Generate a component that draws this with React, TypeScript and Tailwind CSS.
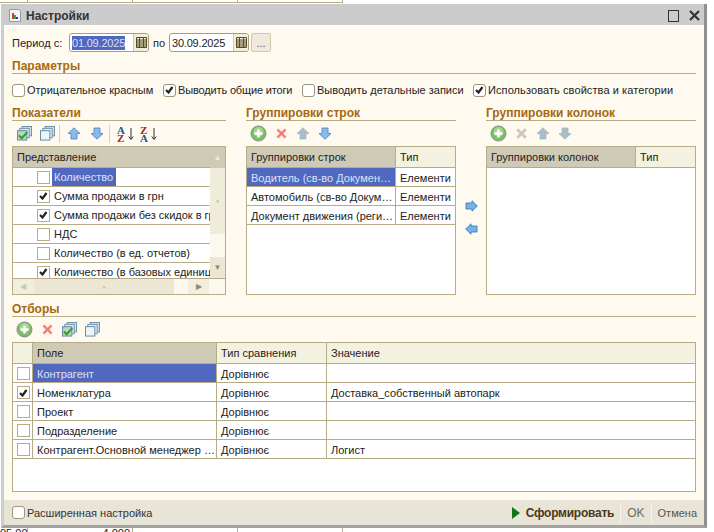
import type { ReactNode } from 'react'
import { clsx } from 'clsx'

const line = 'border-[#b7ac85]'

function AddIcon() {
  return (
    <svg width="17" height="17" viewBox="0 0 17 17">
      <circle cx="8.500" cy="8.500" r="7.500" fill="#7fb96b" stroke="#7d947e" />
      <circle cx="8.500" cy="7" r="5" fill="#a5d68f" />
      <path d="M8.500 4.500v8M4.500 8.500h8" stroke="#fff" strokeWidth="2.400" />
    </svg>
  )
}

function DeleteIcon({ off }: { off?: boolean }) {
  return (
    <svg width="13" height="13" viewBox="0 0 14 14">
      <path
        d="M2 3.500 3.500 2 7 5.300 10.500 2 12 3.500 8.700 7 12 10.500 10.500 12 7 8.700 3.500 12 2 10.500 5.300 7Z"
        fill={off ? '#cfc9bb' : '#f0766c'}
        stroke={off ? '#bfb9ab' : '#e8a49c'}
        strokeWidth="0.8"
      />
    </svg>
  )
}

function ArrowIcon({ dir, off }: { dir: 'up' | 'down'; off?: boolean }) {
  const fill = off ? '#a9bcc8' : '#86bbee'
  const stroke = off ? '#a6b5be' : '#4a80bd'
  return (
    <svg width="14" height="13" viewBox="0 0 14 13" className={dir === 'down' ? 'rotate-180' : ''}>
      <path d="M7 .8 13 6.500H10V12H4V6.500H1Z" fill={fill} stroke={stroke} strokeWidth="0.8" />
    </svg>
  )
}

function SideArrow({ dir }: { dir: 'left' | 'right' }) {
  return (
    <svg width="13" height="12" viewBox="0 0 13 12" className={dir === 'left' ? 'rotate-180' : ''}>
      <path d="M1 3H7V.8L12.300 6 7 11.200V9H1Z" fill="#72b2e8" stroke="#3f78b8" strokeWidth="0.9" />
    </svg>
  )
}

function StackIcon({ checked }: { checked?: boolean }) {
  return (
    <svg width="15" height="15" viewBox="0 0 16 16">
      <rect x="5.500" y="0.500" width="10" height="10" fill="#cfe0ee" stroke="#6a8fa8" />
      <rect x="3" y="2.500" width="10" height="10" fill="#dfeaf3" stroke="#6a8fa8" />
      <rect x="0.500" y="5" width="10" height="10" fill={checked ? '#bcd4c4' : '#eef4f9'} stroke="#5f88a4" />
      {checked && <path d="M2 10 5 13 11 6.500" fill="none" stroke="#2aa02a" strokeWidth="2.200" />}
    </svg>
  )
}

function SortIcon({ top, bottom }: { top: string; bottom: string }) {
  return (
    <span className="flex h-[16px] w-[17px] items-center">
      <span className="flex w-[11px] flex-col font-['Liberation_Serif',serif] text-[11px] font-bold leading-[8px]">
        <span className={top === 'A' ? 'text-[#20558f]' : 'text-[#a3222a]'}>{top}</span>
        <span className={bottom === 'A' ? 'text-[#20558f]' : 'text-[#a3222a]'}>{bottom}</span>
      </span>
      <svg width="6" height="14" viewBox="0 0 6 14">
        <path d="M3 1V12M.8 9.500 3 12.500 5.200 9.500" fill="none" stroke="#333" strokeWidth="1" />
      </svg>
    </span>
  )
}

function CalendarIcon() {
  return (
    <svg width="11" height="11" viewBox="0 0 11 11">
      <path
        d="M.5.500h10v10H.5zM.5 3h10M.5 5h10M.5 7h10M.5 9h10M3.500.500v10M7.500.500v10"
        fill="none"
        stroke="#5a4a20"
      />
    </svg>
  )
}

function Check({ on, flat }: { on?: boolean; flat?: boolean }) {
  return (
    <span
      className={clsx(
        'flex h-[13px] w-[13px] shrink-0 items-center justify-center border bg-white',
        flat ? line : 'rounded-[3px] border-[#9d9479]'
      )}
    >
      {on && (
        <svg width="9" height="8" viewBox="0 0 9 8">
          <path d="M1 4 3.500 6.500 7.500 1" fill="none" stroke="#222" strokeWidth="2.200" />
        </svg>
      )}
    </span>
  )
}

function Heading({ children, className }: { children: ReactNode; className?: string }) {
  return (
    <div className={clsx('h-[16px] border-b pt-[1px] text-[12px] font-bold leading-[14px] text-[#a5690d]', line, className)}>
      {children}
    </div>
  )
}

function DateField({ value, selected, width }: { value: string; selected?: boolean; width: string }) {
  return (
    <div className={clsx('flex h-[19px] items-stretch rounded-[3px] border border-[#a89e7c] bg-white', width)}>
      <div className="flex flex-1 items-center pl-[2px] pt-[1px] tracking-[-0.2px]">
        <span className={selected ? 'bg-[#5068c0] text-[#d8dff5]' : ''}>{value}</span>
      </div>
      <div className="flex w-[15px] items-center justify-center rounded-r-[2px] border-l border-[#cfc8ab] bg-[#f1eedc]">
        <CalendarIcon />
      </div>
    </div>
  )
}

function Option({ label, on, width, textClass }: { label: string; on?: boolean; width: string; textClass?: string }) {
  return (
    <label className={clsx('flex items-center gap-[2px]', width)}>
      <Check on={on} />
      <span className={clsx('whitespace-nowrap', textClass)}>{label}</span>
    </label>
  )
}

function HeaderCell({ children, active, className }: { children?: ReactNode; active?: boolean; className?: string }) {
  return (
    <div
      className={clsx(
        'flex h-[21px] items-center border-r border-b pl-[4px]',
        line,
        active ? 'bg-[#cfcab5]' : 'bg-[#f3f1df]',
        className
      )}
    >
      {children}
    </div>
  )
}

function Cell({ children, selected, className }: { children?: ReactNode; selected?: boolean; className?: string }) {
  return (
    <div
      className={clsx(
        'flex h-[19px] items-center overflow-hidden whitespace-nowrap border-r border-b pl-[4px] pt-[1px]',
        line,
        selected && 'bg-[#5068c0] text-[#dbe1f6]',
        className
      )}
    >
      {children}
    </div>
  )
}

const indicators = [
  { name: 'Количество', on: false },
  { name: 'Сумма продажи в грн', on: true },
  { name: 'Сумма продажи без скидок в грн', on: true },
  { name: 'НДС', on: false },
  { name: 'Количество (в ед. отчетов)', on: false },
  { name: 'Количество (в базовых единицах)', on: true },
]

function IndicatorsTable() {
  return (
    <div className={clsx('h-[149px] overflow-hidden border bg-white', line)}>
      <div className="flex">
        <div className="w-[197px]">
          <HeaderCell active className="border-r-0">Представление</HeaderCell>
          <div className="h-[110px] overflow-hidden">
            {indicators.map((row, i) => (
              <div key={row.name} className={clsx('flex h-[19px] items-center border-b pl-[24px]', line)}>
                <Check on={row.on} flat />
                <span
                  className={clsx(
                    'ml-[2px] overflow-hidden whitespace-nowrap pl-[2px] pt-[1px] leading-[17px]',
                    i === 0 && 'w-[64px] bg-[#5068c0] text-[#dbe1f6]'
                  )}
                >
                  {row.name}
                </span>
              </div>
            ))}
          </div>
        </div>
        <div className="flex h-[131px] w-[16px] flex-col bg-[#fbf9ee]">
          <div className="flex h-[21px] items-center justify-center bg-[#cfcab5] text-[8px] text-[#eee9d8]">▲</div>
          <div className="flex h-[66px] items-center justify-center bg-[#f0ecda] text-[6px] text-[#c9c4b0]">●</div>
          <div className="h-[23px]" />
          <div className="flex h-[21px] items-center justify-center bg-[#ebe7d4] text-[8px] text-[#8d8b80]">▼</div>
        </div>
      </div>
      <div className={clsx('flex h-[16px] items-center border-t bg-[#f2eedd] text-[8px]', line)}>
        <div className="flex w-[21px] items-center justify-center text-[#c9c6b8]">◀</div>
        <div className="flex h-full w-[141px] items-center justify-center bg-[#ebe7d4] text-[6px] text-[#c9c4b0]">●</div>
        <div className="h-full w-[14px] bg-[#fbf9ee]" />
        <div className="flex w-[21px] items-center justify-center text-[#8d8b80]">▶</div>
        <div className="h-full w-[16px] bg-[#fbf9ee]" />
      </div>
    </div>
  )
}

const groupRows = ['Водитель (св-во Докумен…', 'Автомобиль (св-во Докум…', 'Документ движения (реги…']

function GroupTable({ title, rows }: { title: string; rows: string[] }) {
  return (
    <div className={clsx('h-[149px] border bg-white', line)}>
      <div className="grid grid-cols-[149px_59px]">
        <HeaderCell active>{title}</HeaderCell>
        <HeaderCell className="border-r-0">Тип</HeaderCell>
        {rows.map((row, i) => (
          <div key={row} className="contents">
            <Cell selected={i === 0}>{row}</Cell>
            <Cell className="border-r-0">Елементи</Cell>
          </div>
        ))}
      </div>
    </div>
  )
}

const filters = [
  { field: 'Контрагент', on: false, value: '' },
  { field: 'Номенклатура', on: true, value: 'Доставка_собственный автопарк' },
  { field: 'Проект', on: false, value: '' },
  { field: 'Подразделение', on: false, value: '' },
  { field: 'Контрагент.Основной менеджер …', on: false, value: 'Логист' },
]

function FiltersTable() {
  return (
    <div className={clsx('h-[150px] border bg-white', line)}>
      <div className="grid grid-cols-[20px_184px_110px_368px]">
        <HeaderCell />
        <HeaderCell active>Поле</HeaderCell>
        <HeaderCell>Тип сравнения</HeaderCell>
        <HeaderCell className="border-r-0">Значение</HeaderCell>
        {filters.map((row, i) => (
          <div key={row.field} className="contents">
            <Cell className="pl-[4px] pt-0">
              <Check on={row.on} flat />
            </Cell>
            <Cell selected={i === 0}>{row.field}</Cell>
            <Cell>Дорівнює</Cell>
            <Cell className="border-r-0">{row.value}</Cell>
          </div>
        ))}
      </div>
    </div>
  )
}

// the report table behind the dialog, only its edges stick out
function BackdropLines({ first, second, className }: { first?: string; second?: string; className?: string }) {
  return (
    <div className={clsx('flex w-[343px] overflow-hidden leading-[11px]', line, className)}>
      <div className={clsx('w-[28px] shrink-0 border-r pr-[2px] text-right', line)}>{first}</div>
      <div className={clsx('w-[105px] shrink-0 border-r pr-[2px] text-right', line)}>{second}</div>
      <div className={clsx('w-[105px] shrink-0 border-r', line)} />
      <div className={clsx('w-[105px] shrink-0 border-r', line)} />
    </div>
  )
}

export default function App() {
  return (
    <div className="h-[532px] w-[714px] overflow-hidden bg-white font-['Liberation_Sans',Arial,sans-serif] text-[11px] leading-[14px] text-[#222]">
      <BackdropLines className="mb-[1px] h-[3px] border-b" />
      <div className="ml-[1px] flex h-[524px] w-[706px] flex-col border-r-[3px] border-b-[3px] border-l-[3px] border-r-[#8f8f8f] border-b-[#a3a3a3] border-l-[#cccccc]">
        <div className="flex h-[21px] shrink-0 items-center justify-between bg-[#cccccc] pl-[5px] pr-[3px] pt-[2px]">
          <div className="flex items-center gap-[5px]">
            <svg width="12" height="13" viewBox="0 0 12 13">
              <path d="M.5.500h9l2 2v10H.5z" fill="#f7f7f7" stroke="#8d98a8" />
              <path d="M3 4h2v6H3z" fill="#d33" />
              <path d="M5 6h2v4H5z" fill="#3a3" />
              <path d="M7 8h2v2H7z" fill="#33a" />
            </svg>
            <span className="text-[12px] font-bold text-[#333]">Настройки</span>
          </div>
          <div className="flex items-center gap-[10px] pr-[1px]">
            <span className="h-[12px] w-[11px] border-[1.5px] border-[#333]" />
            <svg width="11" height="11" viewBox="0 0 11 11">
              <path d="M1 1 10 10M10 1 1 10" stroke="#333" strokeWidth="2.200" />
            </svg>
          </div>
        </div>

        <div className="flex min-h-0 flex-1 flex-col bg-[#fffaf0] pl-[8px] pr-[8px] pt-[8px]">
          <div className="flex h-[19px] items-center">
            <span className="w-[57px]">Период с:</span>
            <DateField value="01.09.2025" selected width="w-[80px]" />
            <span className="ml-[4px] w-[16px]">по</span>
            <DateField value="30.09.2025" width="w-[80px]" />
            <button className="ml-[2px] h-[19px] w-[20px] rounded-[2px] border border-[#cfc8ab] bg-[#efeadb] leading-[14px] text-[#555]">
              ...
            </button>
          </div>

          <Heading className="mt-[6px]">Параметры</Heading>

          <div className="mt-[9px] flex h-[14px] items-center">
            <Option label="Отрицательное красным" width="w-[151px]" />
            <Option label="Выводить общие итоги" on width="w-[139px]" textClass="tracking-[-0.15px]" />
            <Option label="Выводить детальные записи" width="w-[171px]" />
            <Option label="Использовать свойства и категории" on width="w-[220px]" textClass="tracking-[0.09px]" />
          </div>

          <div className="mt-[8px] flex">
            <div className="w-[214px]">
              <Heading>Показатели</Heading>
              <div className="ml-[5px] flex h-[25px] items-center">
                <StackIcon checked />
                <span className="ml-[8px]"><StackIcon /></span>
                <span className="ml-[4px] h-[18px] border-l border-[#d8d2bc]" />
                <span className="ml-[7px]"><ArrowIcon dir="up" /></span>
                <span className="ml-[9px]"><ArrowIcon dir="down" /></span>
                <span className="ml-[5px] h-[18px] border-l border-[#d8d2bc]" />
                <span className="ml-[7px]"><SortIcon top="A" bottom="Z" /></span>
                <span className="ml-[6px]"><SortIcon top="Z" bottom="A" /></span>
              </div>
              <IndicatorsTable />
            </div>
            <div className="ml-[20px] w-[210px]">
              <Heading>Группировки строк</Heading>
              <div className="ml-[4px] flex h-[25px] items-center gap-[8px]">
                <AddIcon />
                <DeleteIcon />
                <ArrowIcon dir="up" off />
                <ArrowIcon dir="down" />
              </div>
              <GroupTable title="Группировки строк" rows={groupRows} />
            </div>
            <div className="flex w-[30px] flex-col items-center gap-[11px] pt-[95px]">
              <SideArrow dir="right" />
              <SideArrow dir="left" />
            </div>
            <div className="w-[210px]">
              <Heading>Группировки колонок</Heading>
              <div className="ml-[4px] flex h-[25px] items-center gap-[8px]">
                <AddIcon />
                <DeleteIcon off />
                <ArrowIcon dir="up" off />
                <ArrowIcon dir="down" off />
              </div>
              <GroupTable title="Группировки колонок" rows={[]} />
            </div>
          </div>

          <Heading className="mt-[6px]">Отборы</Heading>
          <div className="ml-[4px] flex h-[25px] items-center gap-[8px]">
            <AddIcon />
            <DeleteIcon />
            <StackIcon checked />
            <StackIcon />
          </div>
          <FiltersTable />
        </div>

        <div className="flex h-[25px] shrink-0 items-center justify-between bg-[#e9e4d8] pl-[8px] pr-[7px]">
          <label className="flex items-center gap-[2px] text-[#333]">
            <Check />
            <span>Расширенная настройка</span>
          </label>
          <div className="flex items-center">
            <svg width="8" height="12" viewBox="0 0 8 12">
              <path d="M0 0 8 6 0 12Z" fill="#12741b" />
            </svg>
            <span className="ml-[6px] text-[12px] font-bold tracking-[-0.25px] text-[#4a3a1a]">Сформировать</span>
            <span className="ml-[6px] h-[20px] border-l border-[#f8f5ea]" />
            <span className="ml-[6px] text-[12px] text-[#6f6a5c]">OK</span>
            <span className="ml-[6px] h-[20px] border-l border-[#f8f5ea]" />
            <span className="ml-[6px] text-[#5a5548]">Отмена</span>
          </div>
        </div>
      </div>
      <BackdropLines first="05,00" second="4,000" className="h-[4px]" />
    </div>
  )
}
